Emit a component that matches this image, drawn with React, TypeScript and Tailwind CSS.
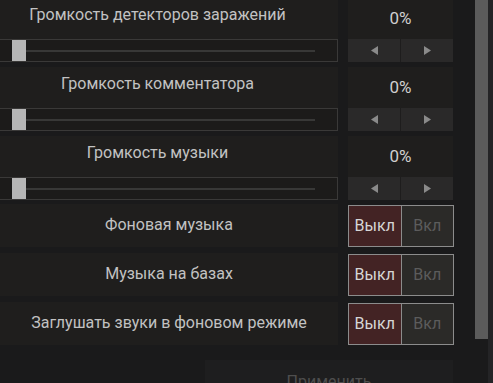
import React from "react";

const font = { fontFamily: "Roboto, 'Noto Sans', sans-serif" };

function ArrowLeft() {
  return (
    <svg width="7" height="9" viewBox="0 0 7 9">
      <polygon points="7,0 7,9 0,4.5" fill="#8a8a8a" />
    </svg>
  );
}

function ArrowRight() {
  return (
    <svg width="7" height="9" viewBox="0 0 7 9">
      <polygon points="0,0 0,9 7,4.5" fill="#8a8a8a" />
    </svg>
  );
}

/* ---------- SLIDER ROW ---------- */
function SliderRow({ label }: { label: string }) {
  return (
    <div className="flex flex-col">
      <div className="flex h-[41px]">
        <div className="w-[338px] bg-[#1f1e1d] pr-[23px] pb-[8px] flex items-center justify-center text-[16px] text-[#c2c2c2]">
          {label}
        </div>
        <div className="w-[10px]" />
        <div className="w-[105px] bg-[#1f1e1d] flex items-center justify-center text-[17px] text-[#cfcfcf]">
          0%
        </div>
      </div>
      <div className="flex h-[23px]">
        <div className="w-[338px] border-y border-r border-[#3a3938] bg-[#1c1b1a] flex items-center">
          <div className="ml-[12px] w-[14px] h-full bg-[#b6b6b6]" />
          <div className="w-[289px] h-[2px] bg-[#383837]" />
        </div>
        <div className="w-[10px]" />
        <div className="w-[105px] flex bg-[#2a2929]">
          <div className="flex-1 flex items-center justify-center">
            <ArrowLeft />
          </div>
          <div className="w-px bg-[#1e1d1d]" />
          <div className="flex-1 flex items-center justify-center">
            <ArrowRight />
          </div>
        </div>
      </div>
    </div>
  );
}

/* ---------- TOGGLE ROW ---------- */
function ToggleRow({ label }: { label: string }) {
  return (
    <div className="flex h-[43px]">
      <div className="w-[338px] bg-[#1f1e1d] pb-[2px] flex items-center justify-center text-[16px] text-[#c2c2c2]">
        {label}
      </div>
      <div className="w-[10px]" />
      <div className="w-[106px] flex items-center">
        <div className="w-full h-[42px] flex border border-[#8c8c8c] text-[16px]">
          <div className="flex-1 bg-[#432324] flex items-center justify-center text-[#d6d6d6]">
            Выкл
          </div>
          <div className="w-px bg-[#8c8c8c]" />
          <div className="flex-1 bg-[#2b2a28] flex items-center justify-center text-[#5c5c5c]">
            Вкл
          </div>
        </div>
      </div>
    </div>
  );
}

export default function App() {
  return (
    <div
      className="w-[493px] h-[383px] overflow-hidden bg-[#1a1a1b] flex"
      style={font}
    >
      {/* ---------- CONTENT ---------- */}
      <div className="w-[475px] flex flex-col">
        <div className="mt-[-2px] flex flex-col gap-[5px]">
          <SliderRow label="Громкость детекторов заражений" />
          <SliderRow label="Громкость комментатора" />
          <SliderRow label="Громкость музыки" />
        </div>
        <div className="mt-[4px] flex flex-col gap-[6px]">
          <ToggleRow label="Фоновая музыка" />
          <ToggleRow label="Музыка на базах" />
          <ToggleRow label="Заглушать звуки в фоновом режиме" />
        </div>
        <div className="mt-[15px] ml-[205px] w-[248px] h-[40px] bg-[#1e1e1f] flex justify-center pt-[10px] text-[16px] text-[#4e4e4e]">
          Применить
        </div>
      </div>

      {/* ---------- SCROLLBAR ---------- */}
      <div className="w-[13px] flex flex-col">
        <div className="h-[339px] bg-[#5b5b5b]" />
      </div>
      <div className="w-[5px] bg-[#242426]" />
    </div>
  );
}
